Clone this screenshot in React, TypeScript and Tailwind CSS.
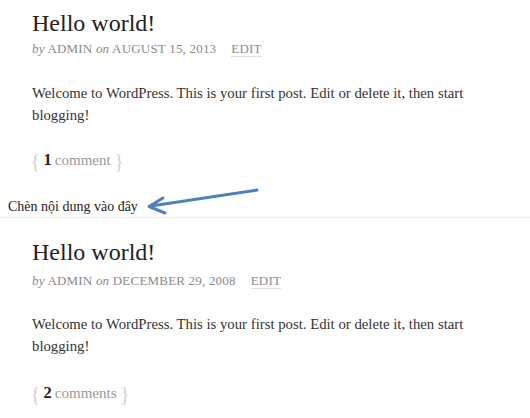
import React from "react";

const serif = { fontFamily: '"Liberation Serif", "DejaVu Serif", serif' };

function Post({
  date,
  count,
  label,
  top,
  metaGap,
  bodyGap,
  commentGap,
}: {
  date: string;
  count: string;
  label: string;
  top: string;
  metaGap: string;
  bodyGap: string;
  commentGap: string;
}) {
  return (
    <div className={`pl-[32px] ${top}`}>
      <h1 className="text-[24px] leading-[30px] text-[#222]">Hello world!</h1>
      <div className={`text-[13px] text-[#8a8a8a] ${metaGap} leading-[16px] tracking-[0.2px]`}>
        <span className="italic">by</span> ADMIN <span className="italic">on</span> {date}
        <span className="ml-[15px] border-b border-[#ddd]">EDIT</span>
      </div>
      <div className={`text-[14.75px] leading-[22px] text-[#333] ${bodyGap} w-[470px]`}>
        Welcome to WordPress. This is your first post. Edit or delete it, then start blogging!
      </div>
      <div className={`${commentGap} flex items-center h-[24px]`}>
        <span className="text-[22px] text-[#d4d4d4] -ml-[2px]">{"{"}</span>
        <span className="text-[16.5px] font-bold text-[#222] ml-[3px]">{count}</span>
        <span className="text-[15px] text-[#999] ml-[3px]">{label}</span>
        <span className="text-[22px] text-[#d4d4d4] ml-[3px]">{"}"}</span>
      </div>
    </div>
  );
}

export default function App() {
  return (
    <div className="w-[530px] h-[418px] bg-white overflow-hidden relative" style={serif}>
      <Post
        date="AUGUST 15, 2013"
        count="1"
        label="comment"
        top="pt-[8px]"
        metaGap="mt-[3px]"
        bodyGap="mt-[25px]"
        commentGap="mt-[22px]"
      />
      <div className="mt-[26px] pl-[8px] text-[14px] text-[#222] leading-[18px]">Chèn nội dung vào đây</div>
      <div className="border-t border-[#eee] mt-[1px]" />
      <Post
        date="DECEMBER 29, 2008"
        count="2"
        label="comments"
        top="pt-[19px]"
        metaGap="mt-[6px]"
        bodyGap="mt-[24px]"
        commentGap="mt-[24px]"
      />
      <svg className="absolute left-0 top-0" width="530" height="418">
        <g stroke="#4f81bd" strokeWidth="3" fill="none" strokeLinecap="round">
          <line x1="257" y1="190" x2="151" y2="206" />
          <polyline points="163,198 149,206.5 165,213" strokeLinejoin="round" />
        </g>
      </svg>
    </div>
  );
}
